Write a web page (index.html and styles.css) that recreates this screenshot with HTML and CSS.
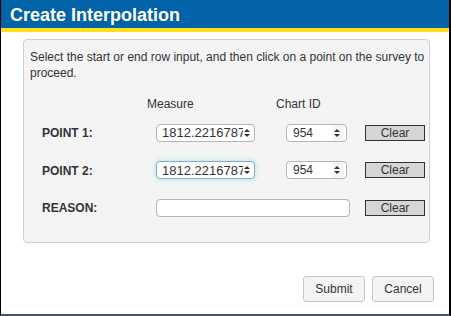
FILE: index.html
```html
<!DOCTYPE html>
<html>
<head>
  <title>Create Interpolation</title>
  <link rel="stylesheet" href="styles.css">
</head>
<body>
  <div id="dialog">
    <div class="titlebar">Create Interpolation</div>

    <div class="panel">
      <p class="intro">Select the start or end row input, and then click on a point on the survey to proceed.</p>

      <div class="grid">
        <span></span>
        <span class="colhead measure-head">Measure</span>
        <span class="colhead chart-head">Chart ID</span>
        <span></span>

        <label class="rowlabel">POINT 1:</label>
        <div class="spin measure"><input type="text" value="1812.2216787"><span class="arrows"></span></div>
        <div class="spin chart"><input type="text" value="954"><span class="arrows"></span></div>
        <button class="clear">Clear</button>

        <label class="rowlabel">POINT 2:</label>
        <div class="spin measure focused"><input type="text" value="1812.2216787"><span class="arrows"></span></div>
        <div class="spin chart"><input type="text" value="954"><span class="arrows"></span></div>
        <button class="clear">Clear</button>

        <label class="rowlabel">REASON:</label>
        <input type="text" class="reason">
        <span></span>
        <button class="clear">Clear</button>
      </div>
    </div>

    <div class="actions">
      <button class="btn">Submit</button>
      <button class="btn">Cancel</button>
    </div>
  </div>
</body>
</html>
```

FILE: styles.css
```css
body {
  margin: 0;
  font-family: "Liberation Sans", Arial, sans-serif;
  color: #333;
}

#dialog {
  width: 448px;
  height: 314px;
  border-left: 1px solid #000;
  border-right: 2px solid #000;
  border-bottom: 2px solid #4b5263;
  background-color: white;
}

.titlebar {
  background-color: #0263a8;
  border-bottom: 4px solid #fde01a;
  color: white;
  font-size: 18px;
  font-weight: bold;
  line-height: 30px;
  padding-left: 9px;
  box-sizing: border-box;
  height: 32px;
}

.panel {
  margin: 7px 0 0 22px;
  width: 407px;
  height: 204px;
  box-sizing: border-box;
  background-color: #f4f4f4;
  border: 1px solid #cfcfcf;
  border-radius: 4px;
  padding: 9px 0 0 6px;
}

.intro {
  margin: 0;
  font-size: 12px;
  line-height: 16px;
}

.grid {
  display: grid;
  grid-template-columns: 114px 130px 79px 60px;
  grid-template-rows: 10px 24px 24px 24px;
  row-gap: 13.5px;
  margin: 16px 0 0 12px;
  align-items: center;
  font-size: 12px;
}

.colhead {
  line-height: 14px;
  align-self: start;
}

.measure-head {
  margin-left: -9px;
}

.chart-head {
  margin-left: -10px;
}

.rowlabel {
  font-weight: bold;
  padding-top: 1px;
}

.spin {
  display: flex;
  align-items: center;
  height: 18px;
  box-sizing: border-box;
  background-color: white;
  border: 1px solid #b5b5b5;
  border-radius: 4px;
  padding-right: 2px;
}

.spin.measure {
  width: 99px;
}

.spin.chart {
  width: 61px;
}

.spin.focused {
  border-color: #7fb3c4;
  box-shadow: 0 0 4px 1px #bfe1ea;
}

.spin input {
  flex: 1;
  min-width: 0;
  border: none;
  outline: none;
  background: transparent;
  font-family: inherit;
  font-size: 12px;
  color: #333;
  padding: 0 0 0 6px;
  height: 16px;
}

.spin.measure input {
  font-size: 13px;
  padding-left: 5px;
}

.arrows {
  width: 9px;
  height: 16px;
  position: relative;
}

.arrows::before,
.arrows::after {
  content: "";
  position: absolute;
  left: 1px;
  border-left: 3.5px solid transparent;
  border-right: 3.5px solid transparent;
}

.arrows::before {
  top: 4px;
  border-bottom: 3px solid #333;
}

.arrows::after {
  top: 9px;
  border-top: 3px solid #333;
}

.spin.chart .arrows {
  background-color: #f5f5f5;
  width: 11px;
}

.reason {
  width: 194px;
  height: 18px;
  box-sizing: border-box;
  border: 1px solid #b5b5b5;
  border-radius: 4px;
  background-color: white;
  outline: none;
}

.clear {
  width: 60px;
  height: 16px;
  box-sizing: border-box;
  background-color: #d6d6d6;
  border: 1px solid #333;
  border-radius: 0;
  font-family: inherit;
  font-size: 12px;
  color: #333;
  padding: 0;
  line-height: 14px;
}

.actions {
  display: flex;
  justify-content: flex-end;
  gap: 7px;
  margin: 33px 15px 0 0;
}

.btn {
  width: 62px;
  height: 26px;
  background-color: #f4f4f4;
  border: 1px solid #c4c4c4;
  border-radius: 3px;
  font-family: inherit;
  font-size: 12px;
  color: #333;
}
```
